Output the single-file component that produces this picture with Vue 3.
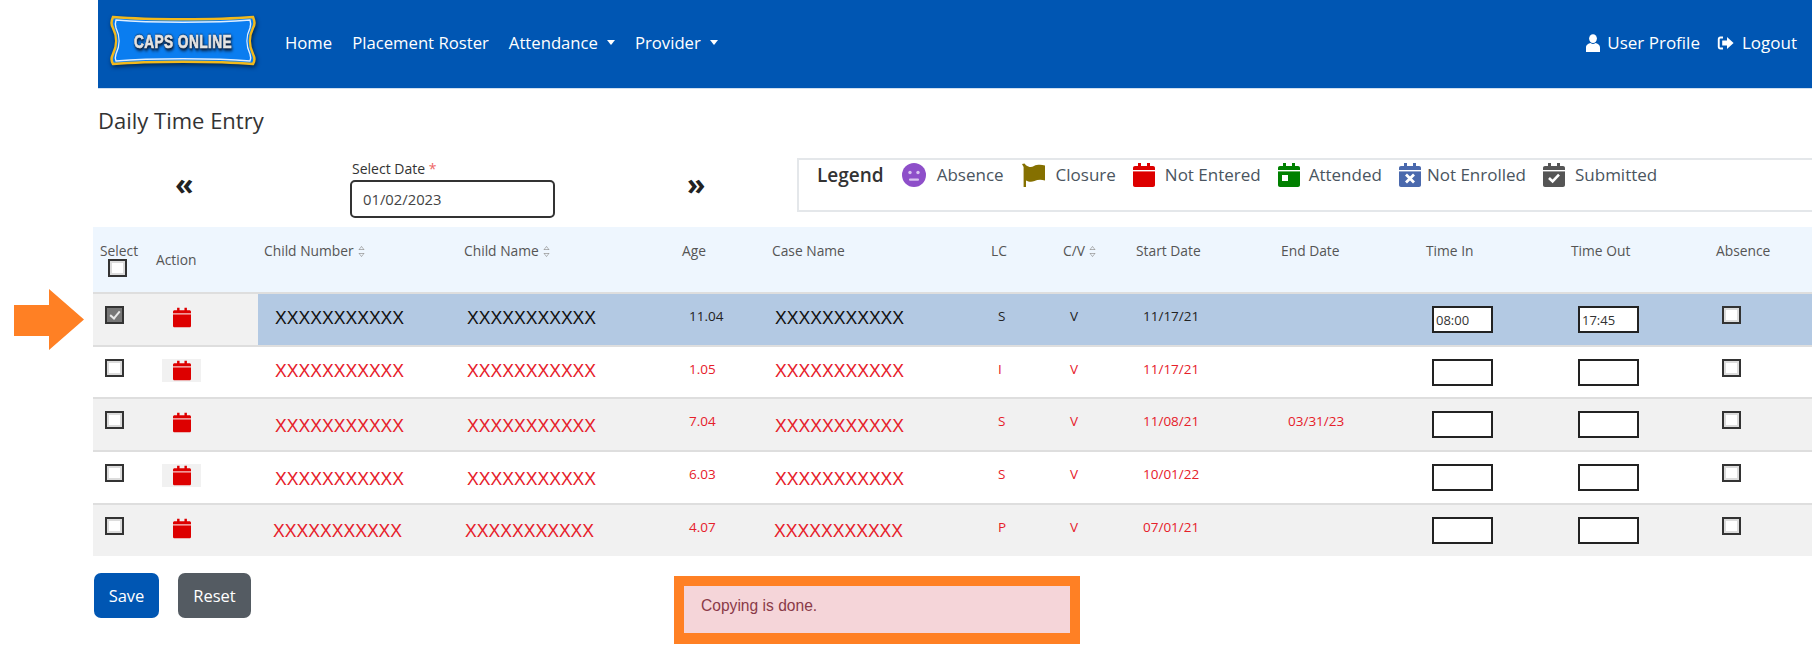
<template>
  <div class="page">
    <nav class="navbar">
      <svg class="logo" width="148" height="54" viewBox="0 0 148 54">
        <path d="M4 3 C40 6 108 6 144 3 C146 8 146 10 144 14 C140 22 140 32 144 40 C146 44 146 47 144 50 C108 47 40 47 4 50 C2 47 2 44 4 40 C8 32 8 22 4 14 C2 10 2 8 4 3 Z" fill="#0a7df0" stroke="#f2b91c" stroke-width="2.5" />
        <path d="M7 6 C42 9 106 9 141 6 C142 9 142 11 141 14 C137 22 137 32 141 40 C142 43 142 45 141 47 C106 44 42 44 7 47 C6 45 6 43 7 40 C11 32 11 22 7 14 C6 11 6 9 7 6 Z" fill="none" stroke="#dfeeff" stroke-width="1.4" />
        <g transform="translate(74 33.5) scale(.72 1)">
          <text class="logo-text" text-anchor="middle">CAPS ONLINE</text>
        </g>
      </svg>
      <div class="nav-links">
        <a>Home</a>
        <a>Placement Roster</a>
        <a class="dropdown">Attendance</a>
        <a class="dropdown">Provider</a>
      </div>
      <div class="nav-right">
        <a>
          <svg width="14" height="18" viewBox="0 0 14 18" fill="#fff"><ellipse cx="7" cy="4.6" rx="3.9" ry="4.4" /><path d="M0 18 V13.5 C0 10.8 2.4 9.6 4.6 9 C6 10.2 8 10.2 9.4 9 C11.6 9.6 14 10.8 14 13.5 V18 Z" /></svg>
          User Profile
        </a>
        <a class="logout">
          <svg width="17" height="16" viewBox="0 0 17 16" fill="#fff"><path d="M6 1.5 H3.5 C1.8 1.5 .8 2.7 .8 4.2 V11.8 C.8 13.3 1.8 14.5 3.5 14.5 H6 V12.6 H3.6 C3 12.6 2.7 12.2 2.7 11.7 V4.3 C2.7 3.8 3 3.4 3.6 3.4 H6 Z" /><path d="M10 2 L16.6 8 L10 14 V10.6 H5.2 V5.4 H10 Z" /></svg>
          Logout
        </a>
      </div>
    </nav>

    <h1 class="title">Daily Time Entry</h1>

    <section class="controls">
      <div class="chevrons prev">«</div>
      <div class="date-field">
        <label>Select Date <span class="req">*</span></label>
        <input type="text" value="01/02/2023" />
      </div>
      <div class="chevrons next">»</div>
      <div class="legend">
        <strong>Legend</strong>
        <span v-for="item in legend" :key="item.label" class="legend-item" :class="item.cls">
          <svg v-if="item.icon === 'face'" width="24" height="24" viewBox="0 0 24 24">
            <circle cx="12" cy="12" r="12" fill="#8e4fc9" />
            <circle cx="8" cy="9.5" r="1.7" fill="#d9c4f0" />
            <circle cx="16" cy="9.5" r="1.7" fill="#d9c4f0" />
            <rect x="7" y="15.5" width="10" height="2.2" rx="1" fill="#d9c4f0" />
          </svg>
          <svg v-else-if="item.icon === 'flag'" width="24" height="24" viewBox="0 0 24 24" fill="#857000">
            <path d="M0 1 L2.5 .5 L4 2.2 C7 4.4 9.5 4.4 12 3 C15 1.6 19 1.6 23 2.4 V17.5 C19 16.4 15.6 16.6 12.5 18 C9 19.4 6.5 18.6 4 17.4 V24 H1.6 V4 Z" />
          </svg>
          <svg v-else width="22" height="24" viewBox="0 0 22 24" :fill="item.color">
            <path :d="calendarPath" />
            <rect x="0" y="7" width="22" height="1.4" fill="#fff" />
            <rect v-if="item.icon === 'attended'" x="4" y="12" width="6" height="6" fill="#fff" />
            <path v-if="item.icon === 'cross'" d="M7 11.5 L15 19.5 M15 11.5 L7 19.5" stroke="#fff" stroke-width="2.8" />
            <path v-if="item.icon === 'check'" d="M6 15 L9.6 18.4 L16 11.6" stroke="#fff" stroke-width="2.6" fill="none" />
          </svg>
          {{ item.label }}
        </span>
      </div>
    </section>

    <table class="entries">
      <colgroup>
        <col v-for="col in columns" :key="col.label" :style="{ width: col.width + 'px' }" />
      </colgroup>
      <thead>
        <tr>
          <th v-for="col in columns" :key="col.label" :class="col.cls">
            <span class="th-label">
              {{ col.label }}
              <svg v-if="col.sort" class="sort" width="7" height="11" viewBox="0 0 7 11" fill="#9a9a9a"><path d="M3.5 0 L6.6 4 H.4 Z M1.6 3.2 H5.4 L3.5 1 Z" fill-rule="evenodd" /><path d="M3.5 11 L6.6 7 H.4 Z M1.6 7.8 H5.4 L3.5 10 Z" fill-rule="evenodd" /></svg>
            </span>
            <input v-if="col.cls === 'c-select'" type="checkbox" class="check head-check" />
          </th>
        </tr>
      </thead>
      <tbody>
        <tr v-for="(row, i) in rows" :key="i" :class="{ selected: row.selected }">
          <td class="c-select"><input type="checkbox" class="check" :checked="row.selected" /></td>
          <td class="c-action">
            <span class="action-icon">
              <svg width="18" height="21" viewBox="0 0 22 24" fill="#dd0000"><path :d="calendarPath" /><rect x="0" y="7" width="22" height="1.2" fill="#fff" /></svg>
            </span>
          </td>
          <td class="c-number masked" :style="{ paddingTop: row.maskTop + 'px' }">XXXXXXXXXXX</td>
          <td class="c-name masked" :style="{ paddingTop: row.maskTop + 'px' }">XXXXXXXXXXX</td>
          <td class="c-age small">{{ row.age }}</td>
          <td class="c-case masked" :style="{ paddingTop: row.maskTop + 'px' }">XXXXXXXXXXX</td>
          <td class="c-lc small">{{ row.lc }}</td>
          <td class="c-cv small">V</td>
          <td class="c-start small">{{ row.start }}</td>
          <td class="c-end small">{{ row.end }}</td>
          <td class="c-in"><input type="text" class="time" :value="row.timeIn" /></td>
          <td class="c-out"><input type="text" class="time" :value="row.timeOut" /></td>
          <td class="c-absence"><input type="checkbox" class="check" /></td>
        </tr>
      </tbody>
    </table>

    <footer class="actions">
      <button class="btn save">Save</button>
      <button class="btn reset">Reset</button>
      <div class="alert">Copying is done.</div>
    </footer>

    <svg class="pointer" width="70" height="61" viewBox="0 0 70 61" fill="#ff8024"><path d="M0 16 H35 V0 L70 30.5 L35 61 V47 H0 Z" /></svg>
  </div>
</template>

<script setup>
const calendarPath = 'M5 0 H8 V3 H14 V0 H17 V3 H20 C21.2 3 22 3.8 22 5 V22 C22 23.2 21.2 24 20 24 H2 C.8 24 0 23.2 0 22 V5 C0 3.8 .8 3 2 3 H5 Z'

const legend = [
  { label: 'Absence', icon: 'face', cls: 'li-absence' },
  { label: 'Closure', icon: 'flag', cls: 'li-closure' },
  { label: 'Not Entered', icon: 'plain', color: '#dd0000', cls: 'li-entered' },
  { label: 'Attended', icon: 'attended', color: '#008000', cls: 'li-attended' },
  { label: 'Not Enrolled', icon: 'cross', color: '#4a69ad', cls: 'li-enrolled' },
  { label: 'Submitted', icon: 'check', color: '#555555', cls: 'li-submitted' },
]

const columns = [
  { label: 'Select', width: 60, cls: 'c-select' },
  { label: 'Action', width: 105, cls: 'c-action' },
  { label: 'Child Number', width: 202, cls: 'c-number', sort: true },
  { label: 'Child Name', width: 220, cls: 'c-name', sort: true },
  { label: 'Age', width: 88, cls: 'c-age' },
  { label: 'Case Name', width: 217, cls: 'c-case' },
  { label: 'LC', width: 73, cls: 'c-lc' },
  { label: 'C/V', width: 74, cls: 'c-cv', sort: true },
  { label: 'Start Date', width: 144, cls: 'c-start' },
  { label: 'End Date', width: 146, cls: 'c-end' },
  { label: 'Time In', width: 146, cls: 'c-in' },
  { label: 'Time Out', width: 144, cls: 'c-out' },
  { label: 'Absence', width: 100, cls: 'c-absence' },
]

const rows = [
  { selected: true, age: '11.04', lc: 'S', start: '11/17/21', end: '', timeIn: '08:00', timeOut: '17:45', maskTop: 14 },
  { age: '1.05', lc: 'I', start: '11/17/21', end: '', timeIn: '', timeOut: '', maskTop: 14 },
  { age: '7.04', lc: 'S', start: '11/08/21', end: '03/31/23', timeIn: '', timeOut: '', maskTop: 17 },
  { age: '6.03', lc: 'S', start: '10/01/22', end: '', timeIn: '', timeOut: '', maskTop: 17 },
  { age: '4.07', lc: 'P', start: '07/01/21', end: '', timeIn: '', timeOut: '', maskTop: 16 },
]
</script>

<style scoped>
.page {
  position: relative;
  width: 1812px;
  height: 666px;
  overflow: hidden;
  background: #fff;
  color: #333;
  font-family: "Open Sans", "Noto Sans", sans-serif;
}

.navbar {
  display: flex;
  align-items: center;
  height: 88px;
  margin-left: 98px;
  padding: 0 15px 0 11px;
  background: #0056b3;
  border-bottom: 1px solid #cfdff0;
  box-sizing: content-box;
  color: #fff;
  font-size: 16.7px;
}

.logo {
  flex-shrink: 0;
  margin-top: -6px;
  filter: drop-shadow(1px 2px 2px rgba(0, 0, 0, 0.55));
}

.logo-text {
  font-family: "Liberation Sans", Arial, sans-serif;
  font-weight: 700;
  font-size: 19px;
  letter-spacing: 0.6px;
  fill: #e4e4e4;
  stroke: #e4e4e4;
  stroke-width: 0.7px;
  filter: drop-shadow(0 0 1px #0a1a33) drop-shadow(1px 2px 1.5px #0a1a33);
}

.nav-links {
  display: flex;
  gap: 20px;
  margin: -3px 0 0 28px;
}

.dropdown {
  display: inline-flex;
  align-items: center;
}

.dropdown::after {
  content: "";
  margin-left: 9px;
  border-top: 5px solid #fff;
  border-left: 4.5px solid transparent;
  border-right: 4.5px solid transparent;
}

.nav-right {
  display: flex;
  gap: 17px;
  margin: -3px 0 0 auto;
  font-size: 17px;
}

.nav-right a {
  display: inline-flex;
  align-items: center;
  gap: 7px;
}

.nav-right a.logout {
  gap: 8px;
}

.title {
  margin: 18px 0 0 98px;
  height: 51px;
  font-size: 22px;
  font-weight: 400;
  line-height: 27px;
}

.controls {
  display: grid;
  grid-template-columns: 252px 336px 111px 1fr;
  margin-left: 98px;
  height: 69px;
}

.chevrons {
  padding-top: 11px;
  font-size: 30px;
  font-weight: 700;
  line-height: 30px;
  color: #222;
}

.chevrons.prev {
  padding-left: 77px;
}

.chevrons.next {
  padding-left: 1px;
}

.date-field label {
  display: block;
  margin: 1px 0 0 2px;
  font-size: 14px;
  line-height: 20px;
}

.req {
  color: #e66;
}

.date-field input {
  display: block;
  box-sizing: border-box;
  width: 205px;
  height: 38px;
  margin-top: 1px;
  padding: 0 11px;
  border: 2px solid #333;
  border-radius: 5px;
  font-family: inherit;
  font-size: 14.8px;
  color: #444;
}

.legend {
  box-sizing: border-box;
  display: flex;
  align-items: flex-start;
  width: 1040px;
  height: 54px;
  padding: 3px 0 0 18px;
  border: 2px solid #e4e7ea;
  font-size: 17px;
  line-height: 24px;
  color: #4a5560;
}

.legend strong {
  margin-right: 18px;
  font-size: 19px;
  font-weight: 600;
  color: #333;
}

.legend-item {
  display: inline-flex;
  align-items: center;
  gap: 10px;
  margin-right: 17px;
}

.li-absence {
  gap: 11px;
  margin-right: 18px;
}

.li-closure {
  gap: 10px;
}

.li-attended {
  gap: 9px;
}

.li-enrolled {
  gap: 6px;
}

.entries {
  table-layout: fixed;
  width: 1719px;
  margin: 0 0 0 93px;
  border-collapse: separate;
  border-spacing: 0;
}

.entries th {
  box-sizing: border-box;
  height: 65px;
  padding: 14px 0 0;
  vertical-align: top;
  text-align: left;
  background: #eef6fe;
  font-size: 13.8px;
  font-weight: 400;
  line-height: 20px;
  color: #555;
  white-space: nowrap;
}

.entries td {
  box-sizing: border-box;
  height: 53px;
  padding: 12px 0 0;
  vertical-align: top;
  border-top: 2px solid #dedede;
  line-height: 20px;
  color: #e6202a;
  white-space: nowrap;
}

.entries tbody tr:nth-child(2) td {
  height: 52px;
}

.entries tbody tr:nth-child(odd) td {
  background: #f1f1f1;
}

.entries tbody tr.selected td {
  background: #b3c9e3;
  color: #222;
}

.entries tbody tr.selected td.c-select,
.entries tbody tr.selected td.c-action {
  background: #f1f1f1;
}

th.c-select { padding-left: 7px; }
th.c-action { padding: 23px 0 0 3px; }
th.c-number { padding-left: 6px; }
th.c-name { padding-left: 4px; }
th.c-age { padding-left: 2px; }
th.c-case { padding-left: 4px; }
th.c-lc { padding-left: 6px; }
th.c-cv { padding-left: 5px; }
th.c-start { padding-left: 4px; }
th.c-end { padding-left: 5px; }
th.c-in { padding-left: 4px; }
th.c-out { padding-left: 3px; }
th.c-absence { padding-left: 4px; }

td.c-select { padding-left: 12px; }
td.c-action { padding-left: 9px; }
td.c-number { padding-left: 17px; }
td.c-name { padding-left: 7px; }
td.c-age { padding-left: 9px; }
td.c-case { padding-left: 7px; }
td.c-lc { padding-left: 13px; }
td.c-cv { padding-left: 12px; }
td.c-start { padding-left: 11px; }
td.c-end { padding-left: 12px; }
td.c-in,
td.c-out,
td.c-absence { padding-left: 10px; }

/* last row sits a little further left in the source */
tbody tr:last-child td.c-number { padding-left: 15px; }
tbody tr:last-child td.c-name { padding-left: 5px; }
tbody tr:last-child td.c-case { padding-left: 6px; }

.masked {
  font-family: "Liberation Sans", Arial, sans-serif;
  font-size: 17.6px;
  color: #ed1c24;
}

.entries tbody tr.selected td.masked {
  color: #111;
}

.small {
  font-size: 13.5px;
}

.th-label {
  display: inline-flex;
  align-items: center;
  gap: 4px;
}

.sort {
  flex-shrink: 0;
}

.check {
  appearance: none;
  display: block;
  box-sizing: border-box;
  position: relative;
  width: 19px;
  height: 18px;
  margin: 0;
  background: #fff;
  border: 2px solid #333;
  box-shadow: inset 0 0 0 2px #dcdcdc;
}

.check:checked {
  background: #777;
  box-shadow: none;
}

.check:checked::after {
  content: "";
  position: absolute;
  left: 5px;
  top: 1px;
  width: 4px;
  height: 8px;
  border: solid #e8e8e8;
  border-width: 0 2px 2px 0;
  transform: rotate(40deg);
}

.head-check {
  margin: -2px 0 0 8px;
}

.action-icon {
  display: flex;
  justify-content: center;
  align-items: center;
  width: 39px;
  height: 23px;
  background: #f1f1f1;
}

.time {
  box-sizing: border-box;
  display: block;
  width: 61px;
  height: 27px;
  padding: 0 2px;
  background: #fff;
  border: 2px solid #222;
  font-family: inherit;
  font-size: 13px;
  color: #333;
}

.actions {
  display: flex;
  align-items: flex-start;
  margin: 17px 0 0 94px;
}

.btn {
  box-sizing: border-box;
  height: 45px;
  padding: 0;
  border: 0;
  border-radius: 7px;
  font-family: inherit;
  font-size: 16.5px;
  color: #fff;
}

.save {
  width: 65px;
  background: #0056b3;
}

.reset {
  width: 73px;
  margin-left: 19px;
  background: #545b62;
}

.alert {
  box-sizing: border-box;
  width: 406px;
  height: 68px;
  margin: 3px 0 0 423px;
  padding: 10px 17px 0;
  background: #f5d5d9;
  border: solid #ff8024;
  border-width: 10px 10px 11px;
  font-family: "Liberation Sans", Arial, sans-serif;
  font-size: 15.6px;
  line-height: 20px;
  color: #8a3a48;
}

.pointer {
  position: absolute;
  left: 14px;
  top: 289px;
}
</style>

<style>
body {
  margin: 0;
  overflow: hidden;
}
</style>
